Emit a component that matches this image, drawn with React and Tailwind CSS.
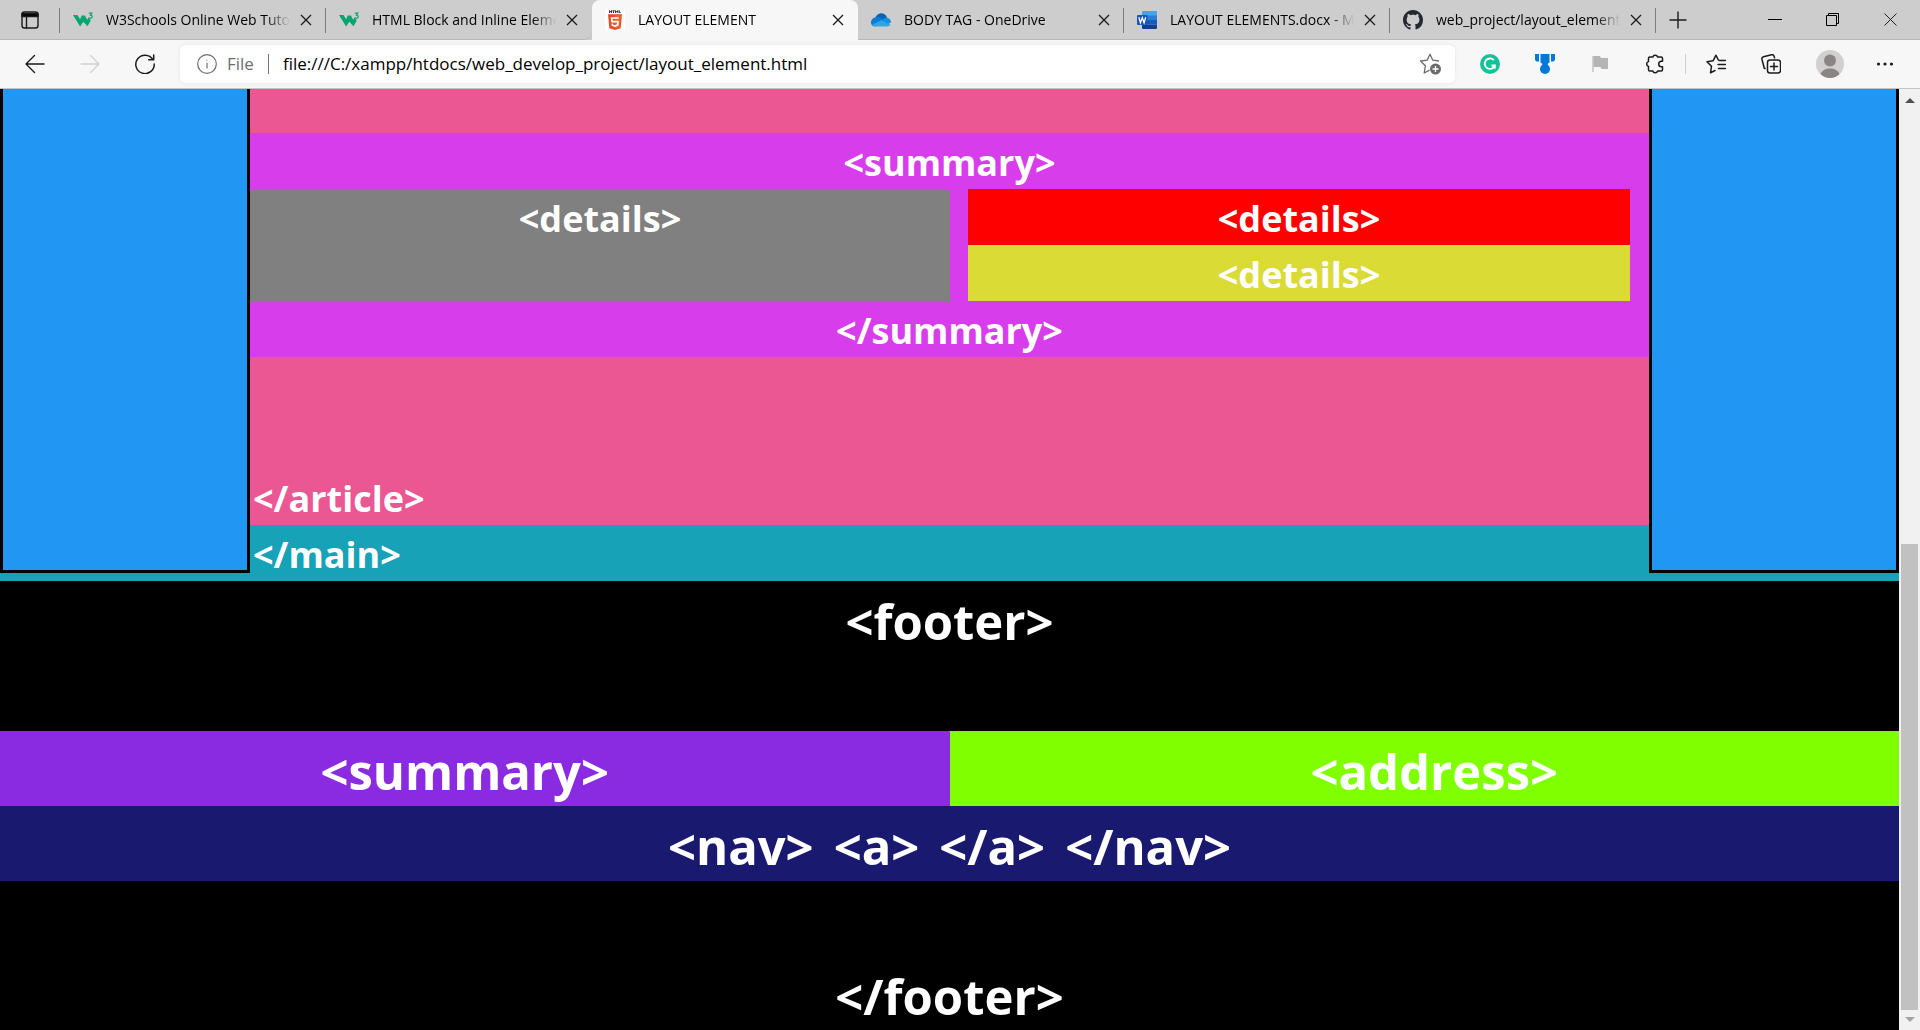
import React from "react";

const W3Icon = () => (
  <svg viewBox="0 0 20 20" className="size-5" aria-hidden="true">
    <path d="M0 5h4.500l2.600 4.300L8.700 5.500h3.200l2.300 4.200 1.500-2.400 2 3.400-3.200 5.600-4.200-4.600-3.200 4.800z" fill="#04a66d" />
    <path d="M15.800 3.200h3l-1.300 1.900c1 0 1.700.6 1.700 1.500 0 1-.8 1.700-1.800 1.700-.6 0-1.100-.2-1.500-.6" fill="none" stroke="#04a66d" strokeWidth="1.200" />
  </svg>
);

const HtmlIcon = () => (
  <svg viewBox="0 0 20 20" className="size-5" aria-hidden="true">
    <path d="M0 0h20v20H0z" fill="#fff" />
    <path d="M4.500.3v2.800M6.500.3v2.800M4.500 1.700h2M7.300.8h2.400M8.500.8v2.300M10.500 3.100V.6l1.200 1.600L12.900.6v2.500M14.300.3v2.300h1.500" stroke="#222" strokeWidth=".9" fill="none" />
    <path d="M3 4.200h14l-1.300 14L10 20l-5.700-1.800z" fill="#e44d26" />
    <path d="M10 5.300h5.800l-1.100 12L10 18.800z" fill="#f16529" />
    <path d="M13.800 8H6.700l.4 3.700h5.900l-.4 3.400L10 16l-2.600-.8-.1-1.600" fill="none" stroke="#fff" strokeWidth="1.700" />
  </svg>
);

const CloudIcon = () => (
  <svg viewBox="0 0 20 20" className="size-5" aria-hidden="true">
    <path d="M4 10.500C3.700 7 6.500 3.500 10 3.300c3 0 5.300 1.700 6 4.300l-3 5z" fill="#0364b8" />
    <path d="M5 7.200c2-.5 4 .2 6 1.600l3.500 2-11 5.700C1 16.200 0 14.400 0 12.500c0-3 2.200-5 5-5.300z" fill="#0f7ad8" />
    <path d="M10 11.300l3.200-3.100c3.400-1.300 6.800 1 6.800 4.300l-3.500 2z" fill="#1490df" />
    <path d="M10.200 10.300l9.200 4.500c-.6 1.200-1.800 1.700-3.400 1.700H4.500c-1.400 0-2.600-.7-3.400-1.800z" fill="#28a8ea" />
  </svg>
);

const WordIcon = () => (
  <svg viewBox="0 0 20 20" className="size-5" aria-hidden="true">
    <path d="M6 1h13q1 0 1 1v4H5V2q0-1 1-1z" fill="#41a5ee" />
    <path d="M5 5.500h15V10H5z" fill="#2b7cd3" />
    <path d="M5 10h15v4.500H5z" fill="#185abd" />
    <path d="M5 14.500h15V18q0 1-1 1H6q-1 0-1-1z" fill="#103f91" />
    <rect y="5" width="10.500" height="10" rx="1" fill="#1857b8" />
    <path d="M1.800 7.300l1.600 5.500L5.300 7.700l1.800 5.100 1.600-5.500" fill="none" stroke="#fff" strokeWidth="1.300" />
  </svg>
);

const GithubIcon = () => (
  <svg viewBox="0 0 16 16" className="size-5" aria-hidden="true">
    <path
      fill="#24292f"
      d="M8 0C3.580 0 0 3.580 0 8c0 3.540 2.290 6.530 5.470 7.590.4.070.55-.17.55-.38 0-.19-.01-.82-.01-1.490-2.010.37-2.530-.49-2.690-.94-.09-.23-.48-.94-.82-1.130-.28-.15-.68-.52-.01-.53.63-.01 1.080.58 1.230.82.72 1.210 1.870.87 2.330.66.070-.52.28-.87.51-1.070-1.780-.2-3.640-.89-3.640-3.950 0-.87.31-1.590.82-2.150-.08-.2-.36-1.020.08-2.120 0 0 .67-.21 2.200.82.64-.18 1.320-.27 2-.27s1.360.09 2 .27c1.530-1.040 2.200-.82 2.200-.82.44 1.100.16 1.920.08 2.120.51.56.82 1.270.82 2.150 0 3.070-1.870 3.750-3.650 3.950.29.25.54.73.54 1.480 0 1.070-.01 1.930-.01 2.200 0 .21.15.46.55.38A8.010 8.010 0 0 0 16 8c0-4.420-3.580-8-8-8z"
    />
  </svg>
);

const CloseIcon = () => (
  <svg viewBox="0 0 12 12" className="size-3" fill="none" stroke="#1a1a1a" strokeWidth="1.300" aria-hidden="true">
    <path d="M1 1l10 10M11 1L1 11" />
  </svg>
);

const Line = ({ children, color = "#1b1b1b", width = 1.4 }) => (
  <svg viewBox="0 0 20 20" className="size-5" fill="none" stroke={color} strokeWidth={width} strokeLinecap="round" strokeLinejoin="round" aria-hidden="true">
    {children}
  </svg>
);

const tabs = [
  { title: "W3Schools Online Web Tutorials", icon: <W3Icon /> },
  { title: "HTML Block and Inline Elements", icon: <W3Icon />, last: true },
  { title: "LAYOUT ELEMENT", icon: <HtmlIcon />, active: true },
  { title: "BODY TAG - OneDrive", icon: <CloudIcon /> },
  { title: "LAYOUT ELEMENTS.docx - Microsoft Word", icon: <WordIcon /> },
  { title: "web_project/layout_element.html", icon: <GithubIcon /> },
];

const FADE = "[mask-image:linear-gradient(to_right,black_calc(100%-24px),transparent)]";

function Tab({ title, icon, active, last }) {
  const look = active
    ? "rounded-t-lg bg-[#f7f7f7]"
    : last
      ? "border-b border-[#b8b8b8] rounded-br-lg"
      : "border-b border-[#b8b8b8]";
  return (
    <div className={`relative flex h-10 w-[266px] min-w-0 shrink items-center pl-[13px] pr-3.5 ${look}`}>
      <span className="shrink-0">{icon}</span>
      <button type="button" className={`ml-[13px] min-w-0 flex-1 overflow-hidden whitespace-nowrap text-left text-sm text-black ${FADE}`}>
        {title}
      </button>
      <button type="button" aria-label={`Close ${title}`} className="ml-2.5 shrink-0">
        <CloseIcon />
      </button>
      {!active && !last && <span className="absolute right-0 top-2 h-[25px] w-px bg-[#7d7d7d]" />}
    </div>
  );
}

function TabStrip() {
  return (
    <header className="flex h-10 bg-[#cdcdcd]">
      <div className="relative flex w-[60px] shrink-0 items-center border-b border-[#b8b8b8] pl-5">
        <button type="button" aria-label="Tab actions">
          <Line width="1.400">
            <rect x="2" y="2" width="16" height="16" rx="2.500" />
            <path d="M2 3.500h16v3H2z" fill="#000" />
            <path d="M6.500 6v12" />
          </Line>
        </button>
        <span className="absolute right-0 top-2 h-[25px] w-px bg-[#7d7d7d]" />
      </div>
      <nav aria-label="Open tabs" className="flex min-w-0">
        {tabs.map((t) => (
          <Tab key={t.title} {...t} />
        ))}
      </nav>
      <div className="flex flex-1 items-center border-b border-[#b8b8b8] pl-3">
        <button type="button" aria-label="New tab">
          <svg viewBox="0 0 20 20" className="size-5" stroke="#1b1b1b" strokeWidth="1.400" aria-hidden="true">
            <path d="M10 1.500v17M1.500 10h17" />
          </svg>
        </button>
        <div className="ml-auto flex items-center gap-11 pr-[22px]">
          <button type="button" aria-label="Minimize">
            <svg viewBox="0 0 14 14" className="size-3.5" stroke="#000" fill="none" aria-hidden="true"><path d="M0 6.500h14" /></svg>
          </button>
          <button type="button" aria-label="Restore">
            <svg viewBox="0 0 14 14" className="size-3.5" stroke="#000" fill="none" aria-hidden="true"><path d="M.5 2.500h10v10H.5zM2.500 2.500V.5h10v10h-2" /></svg>
          </button>
          <button type="button" aria-label="Close window">
            <svg viewBox="0 0 14 14" className="size-3.5" stroke="#222" fill="none" aria-hidden="true"><path d="M.5.5l12 12M12.500.5l-12 12" /></svg>
          </button>
        </div>
      </div>
    </header>
  );
}

function Toolbar() {
  return (
    <div className="flex h-[49px] items-center border-b border-[#c4c4c4] bg-[#f7f7f7] pl-[25px] pr-[25px]">
      <div className="flex shrink-0 items-center gap-[35px]">
        <button type="button" aria-label="Back">
          <Line><path d="M19 10H1M9.500 1.500L1 10l8.500 8.500" /></Line>
        </button>
        <button type="button" aria-label="Forward" disabled>
          <Line color="#d0d0d0"><path d="M1 10h18M10.500 1.500L19 10l-8.500 8.500" /></Line>
        </button>
        <button type="button" aria-label="Refresh">
          <Line width="1.500"><path d="M17.800 5.500A9.200 9.200 0 1 0 19.200 10M18.700 1v4.800h-5" /></Line>
        </button>
      </div>
      <div className="ml-[25px] flex h-[38px] min-w-0 flex-1 items-center rounded-md bg-white pl-[17px] pr-3.5 shadow-[0_0_4px_#e6e6e6]">
        <Line color="#6c6c6c" width="1.200">
          <circle cx="10" cy="10" r="9.300" />
          <path d="M10 9v5M10 6v.1" />
        </Line>
        <span className="ml-2.5 text-[17px] text-[#6e6e6e]">File</span>
        <span className="ml-3.5 h-5 w-px bg-[#767676]" />
        <input
          aria-label="Address"
          defaultValue="file:///C:/xampp/htdocs/web_develop_project/layout_element.html"
          className="ml-3.5 min-w-0 flex-1 bg-transparent text-[17px] text-black outline-none"
        />
        <button type="button" aria-label="Add to favorites">
          <svg viewBox="0 0 22 22" className="size-[22px]" fill="none" stroke="#6c6c6c" strokeWidth="1.300" strokeLinejoin="round" aria-hidden="true">
            <path d="M20 8l-6.300-.9L11 1.200 8.200 7.100 1.500 8l4.900 4.700L5.200 20l5.300-2.900" />
            <circle cx="16.500" cy="16" r="5.500" fill="#6c6c6c" stroke="none" />
            <path d="M16.500 13v6M13.500 16h6" stroke="#fff" />
          </svg>
        </button>
      </div>
      <div className="ml-[25px] flex shrink-0 items-center gap-[35px]">
        <button type="button" aria-label="Grammarly">
          <svg viewBox="0 0 20 20" className="size-5" fill="none" aria-hidden="true">
            <circle cx="10" cy="10" r="10" fill="#15c39a" />
            <path d="M13.800 6.200a5.200 5.200 0 1 0 1 5.300h-3.300M14.800 11.500v3.300" stroke="#fff" strokeWidth="1.800" />
          </svg>
        </button>
        <button type="button" aria-label="Rewards">
          <svg viewBox="0 0 20 20" className="size-5" fill="#0078d7" aria-hidden="true">
            <path d="M0 0h4v7.500H1.500L0 6zM5.500 0h9v8.500l-1.800 1.300v3H7.300v-3L5.500 8.500zM16 0h4v6l-1.500 1.500H16z" />
            <circle cx="10" cy="15" r="5" />
          </svg>
        </button>
        <button type="button" aria-label="Report">
          <svg viewBox="0 0 20 20" className="size-5" fill="#b5b5b5" aria-hidden="true">
            <path d="M2 2h2v16H2z" fill="#d0d0d0" />
            <path d="M3.500 2h6.500l1 2h7v11h-6.500l-1-2h-7z" />
          </svg>
        </button>
        <button type="button" aria-label="Extensions">
          <Line width="1.500">
            <path d="M4.800 3h3a2.500 2.500 0 0 1 4.800 0h3.600c.8 0 1.300.5 1.300 1.300v2.900h-1a2.800 2.800 0 0 0 0 5.600h1v2.900c0 .8-.5 1.300-1.300 1.300h-3.600a2.500 2.500 0 0 1-4.800 0h-3c-.8 0-1.300-.5-1.300-1.300v-3.300a2.500 2.500 0 0 1 0-4.800V4.300C3.500 3.500 4 3 4.800 3z" />
          </Line>
        </button>
      </div>
      <span className="ml-5 h-5 w-px shrink-0 bg-[#cfcfcf]" />
      <div className="ml-5 flex shrink-0 items-center gap-[35px]">
        <button type="button" aria-label="Favorites">
          <Line width="1.500">
            <path d="M12.200 5.800L10 1.200 7.200 6.700 1 7.700l4.500 4.500-1 6.600L9 16.500M13 6.500h6.500M12 10.500h7.500M12.500 14.500h7" />
          </Line>
        </button>
        <button type="button" aria-label="Collections">
          <Line width="1.500">
            <path d="M4 14.500l-.8-.5L1 5.500C.7 4.200 1.300 3 2.500 2.700L10.500.8c1.300-.3 2.300.4 2.600 1.500l.4 1.500" />
            <rect x="6.500" y="6" width="13" height="13" rx="2.500" />
            <path d="M13 9v7M9.500 12.500h7" />
          </Line>
        </button>
        <button type="button" aria-label="Profile">
          <svg viewBox="0 0 28 28" className="size-7" aria-hidden="true">
            <circle cx="14" cy="14" r="14" fill="#d2d0ce" />
            <circle cx="14" cy="10.500" r="6" fill="#8a8583" />
            <path d="M4.500 24C6 20.500 9.500 18.500 14 18.500s8 2 9.500 5.500C21 26.700 17.500 28 14 28s-7-1.300-9.500-4z" fill="#8a8583" />
          </svg>
        </button>
        <button type="button" aria-label="Settings and more" className="-ml-1">
          <svg viewBox="0 0 20 20" className="size-5" fill="#1b1b1b" aria-hidden="true">
            <circle cx="3.500" cy="10" r="1.600" />
            <circle cx="10" cy="10" r="1.600" />
            <circle cx="16.500" cy="10" r="1.600" />
          </svg>
        </button>
      </div>
    </div>
  );
}

function PageContent() {
  return (
    <div className="min-w-0 flex-1 font-bold text-white">
      <div className="flex bg-[#18a2b8] text-4xl leading-[52px]">
        <aside className="mb-2 w-[250px] shrink-0 border-3 border-t-0 border-black bg-[#2196f3]" />
        <main className="min-w-0 flex-1">
          <article className="bg-[#ea5793] pt-11">
            <section className="bg-[#d73deb] text-center">
              <h2 className="pt-1">&lt;summary&gt;</h2>
              <div className="flex pr-[19px]">
                <div className="w-[700px] shrink bg-[#808080] pt-1">&lt;details&gt;</div>
                <div className="ml-[18px] min-w-0 flex-1">
                  <p className="bg-[#ff0000] pt-1">&lt;details&gt;</p>
                  <p className="bg-[#dbdb35] pt-1">&lt;details&gt;</p>
                </div>
              </div>
              <p className="pt-1">&lt;/summary&gt;</p>
            </section>
            <p className="pl-[3px] pt-29">&lt;/article&gt;</p>
          </article>
          <p className="pl-[3px] pt-1">&lt;/main&gt;</p>
        </main>
        <aside className="mb-2 w-[250px] shrink-0 border-3 border-t-0 border-black bg-[#2196f3]" />
      </div>
      <footer className="bg-black text-center text-[49px] leading-[69px]">
        <p className="pb-[75px] pt-1.5">&lt;footer&gt;</p>
        <div className="grid grid-cols-2">
          <p className="bg-[#8a2be2] pr-5 pt-1.5">&lt;summary&gt;</p>
          <address className="bg-[#7fff00] pl-5 pt-1.5 not-italic">&lt;address&gt;</address>
        </div>
        <nav className="flex justify-center gap-5 bg-[#191970] pt-1.5">
          <span>&lt;nav&gt;</span>
          <span>&lt;a&gt;</span>
          <span>&lt;/a&gt;</span>
          <span>&lt;/nav&gt;</span>
        </nav>
        <p className="pt-[81px]">&lt;/footer&gt;</p>
      </footer>
    </div>
  );
}

function Scrollbar() {
  return (
    <div className="flex w-[21px] shrink-0 flex-col items-center bg-[#f1f1f1]">
      <svg viewBox="0 0 10 20" className="h-5 w-2.5 shrink-0" fill="#505050" aria-hidden="true"><path d="M0 14l5-5 5 5z" /></svg>
      <div className="grow-[435]" />
      <div className="w-[17px] grow-[466] bg-[#c1c1c1]" />
      <svg viewBox="0 0 10 20" className="h-5 w-2.5 shrink-0" fill="#a3a3a3" aria-hidden="true"><path d="M0 7l5 5 5-5z" /></svg>
    </div>
  );
}

export default function App() {
  return (
    <div className="flex h-screen flex-col overflow-hidden bg-black font-['Open_Sans','Noto_Sans',sans-serif]">
      <TabStrip />
      <Toolbar />
      <div className="flex min-h-0 flex-1 overflow-hidden">
        <PageContent />
        <Scrollbar />
      </div>
    </div>
  );
}
